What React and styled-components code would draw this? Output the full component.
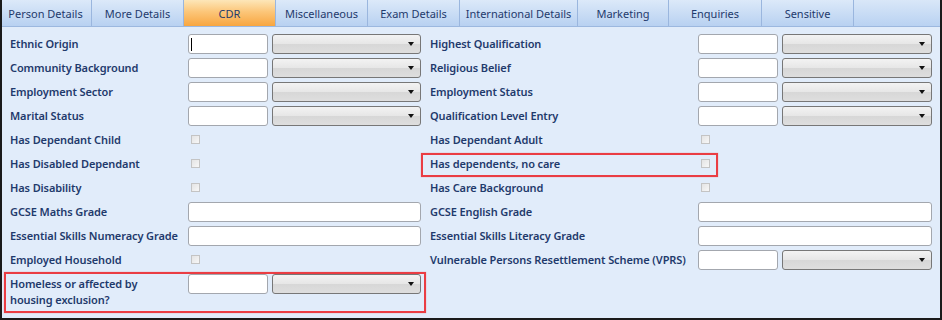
import styled, { createGlobalStyle } from "styled-components";

const GlobalStyle = createGlobalStyle`
  html, body { margin: 0; padding: 0; background: #ffffff; }
  body { font-family: "Noto Sans", "Open Sans", sans-serif; }
`;

const tabs = [
  { label: "Person Details", width: 92 },
  { label: "More Details", width: 92 },
  { label: "CDR", width: 92, active: true },
  { label: "Miscellaneous", width: 92 },
  { label: "Exam Details", width: 92 },
  { label: "International Details", width: 118 },
  { label: "Marketing", width: 91 },
  { label: "Enquiries", width: 93 },
  { label: "Sensitive", width: 92 },
];

const rows = [
  [{ label: "Ethnic Origin", kind: "combo", caret: true }, { label: "Highest Qualification", kind: "combo" }],
  [{ label: "Community Background", kind: "combo" }, { label: "Religious Belief", kind: "combo" }],
  [{ label: "Employment Sector", kind: "combo" }, { label: "Employment Status", kind: "combo" }],
  [{ label: "Marital Status", kind: "combo" }, { label: "Qualification Level Entry", kind: "combo" }],
  [{ label: "Has Dependant Child", kind: "check" }, { label: "Has Dependant Adult", kind: "check" }],
  [{ label: "Has Disabled Dependant", kind: "check" }, { label: "Has dependents, no care", kind: "check" }],
  [{ label: "Has Disability", kind: "check" }, { label: "Has Care Background", kind: "check" }],
  [{ label: "GCSE Maths Grade", kind: "text" }, { label: "GCSE English Grade", kind: "text" }],
  [{ label: "Essential Skills Numeracy Grade", kind: "text" }, { label: "Essential Skills Literacy Grade", kind: "text" }],
  [{ label: "Employed Household", kind: "check" }, { label: "Vulnerable Persons Resettlement Scheme (VPRS)", kind: "combo" }],
  [{ label: "Homeless or affected by housing exclusion?", kind: "combo", tall: true }, null],
];

function Control({ field }) {
  if (field.kind === "check") {
    return (
      <ControlCell>
        <CheckBox />
      </ControlCell>
    );
  }
  if (field.kind === "text") {
    return (
      <ControlCell>
        <TextBox $wide />
      </ControlCell>
    );
  }
  return (
    <ControlCell>
      <TextBox>{field.caret && <Caret />}</TextBox>
      <Select>
        <Arrow />
      </Select>
    </ControlCell>
  );
}

function Field({ field }) {
  if (!field) return [<div key="a" />, <div key="b" />];
  return [
    <Label key="a" $tall={field.tall}>
      {field.label}
    </Label>,
    <Control key="b" field={field} />,
  ];
}

export default function App() {
  return (
    <>
      <GlobalStyle />
      <Frame>
        <TabBar>
          {tabs.map((t) => (
            <Tab key={t.label} $active={t.active} style={{ width: t.width }}>
              {t.label}
            </Tab>
          ))}
        </TabBar>
        <Form>
          {rows.map((r, i) => [
            <Field key={`l${i}`} field={r[0]} />,
            <div key={`g${i}`} />,
            <Field key={`r${i}`} field={r[1]} />,
          ])}
        </Form>
        <Highlight style={{ left: 419, top: 153, width: 297, height: 24 }} />
        <Highlight style={{ left: 2, top: 272, width: 422, height: 41 }} />
      </Frame>
    </>
  );
}

const Frame = styled.div`
  position: relative;
  width: 942px;
  height: 320px;
  box-sizing: border-box;
  background: #e1ecfa;
  border-left: 2px solid #1a1a1a;
  border-right: 2px solid #1a1a1a;
  border-bottom: 2px solid #1a1a1a;
  overflow: hidden;
`;

const TabBar = styled.div`
  display: flex;
  height: 27px;
  margin-left: -2px;
  margin-right: -2px;
  background: linear-gradient(#d9e7f8, #b9d2f2);
  border-bottom: 1px solid #9cb8df;
  box-sizing: border-box;
`;

const Tab = styled.div`
  display: flex;
  align-items: center;
  justify-content: center;
  box-sizing: border-box;
  height: 26px;
  font-size: 11px;
  color: #1f3a6c;
  border-right: 1px solid #9ab6de;
  background: ${(p) =>
    p.$active
      ? "linear-gradient(#fde6b8 0%, #fcc679 45%, #f8a640 100%)"
      : "linear-gradient(#dce9f9, #b8d1f1)"};
`;

const Form = styled.div`
  display: grid;
  grid-template-columns: 178px 233px 9px 268px 234px;
  grid-auto-rows: 24px;
  padding: 5px 0 0 8px;
  & > :nth-last-child(-n + 5) {
    min-height: 40px;
  }
`;

const Label = styled.div`
  display: flex;
  align-items: ${(p) => (p.$tall ? "flex-start" : "center")};
  padding-top: ${(p) => (p.$tall ? "4px" : "0")};
  font-size: 11px;
  font-weight: 600;
  letter-spacing: -0.1px;
  line-height: 16px;
  color: #1f3a6c;
  white-space: ${(p) => (p.$tall ? "normal" : "nowrap")};
  max-width: ${(p) => (p.$tall ? "150px" : "none")};
`;

const ControlCell = styled.div`
  display: flex;
  align-items: flex-start;
  gap: 4px;
  padding-top: 2px;
`;

const TextBox = styled.div`
  position: relative;
  box-sizing: border-box;
  width: ${(p) => (p.$wide ? "100%" : "80px")};
  flex: none;
  height: 20px;
  background: #ffffff;
  border: 1px solid #a3a7ae;
  border-radius: 3px;
`;

const Caret = styled.span`
  position: absolute;
  left: 2px;
  top: 3px;
  width: 1px;
  height: 13px;
  background: #000000;
`;

const Select = styled.div`
  display: flex;
  align-items: center;
  justify-content: flex-end;
  flex: 1;
  box-sizing: border-box;
  height: 20px;
  padding-right: 6px;
  border: 1px solid #777777;
  border-radius: 3px;
  background: linear-gradient(#f3f3f3 0%, #e6e6e6 50%, #d7d7d7 51%, #dedede 100%);
`;

const Arrow = styled.span`
  width: 0;
  height: 0;
  border-left: 3.5px solid transparent;
  border-right: 3.5px solid transparent;
  border-top: 4px solid #111111;
`;

const CheckBox = styled.span`
  box-sizing: border-box;
  width: 9px;
  height: 9px;
  margin: 5px 0 0 3px;
  border: 1px solid #c4c4c4;
  background: linear-gradient(135deg, #e4e4e4, #f7f7f7);
`;

const Highlight = styled.div`
  position: absolute;
  box-sizing: border-box;
  border: 2px solid #ea3d43;
  box-shadow: 0 0 1px rgba(234, 61, 67, 0.5);
  pointer-events: none;
`;
